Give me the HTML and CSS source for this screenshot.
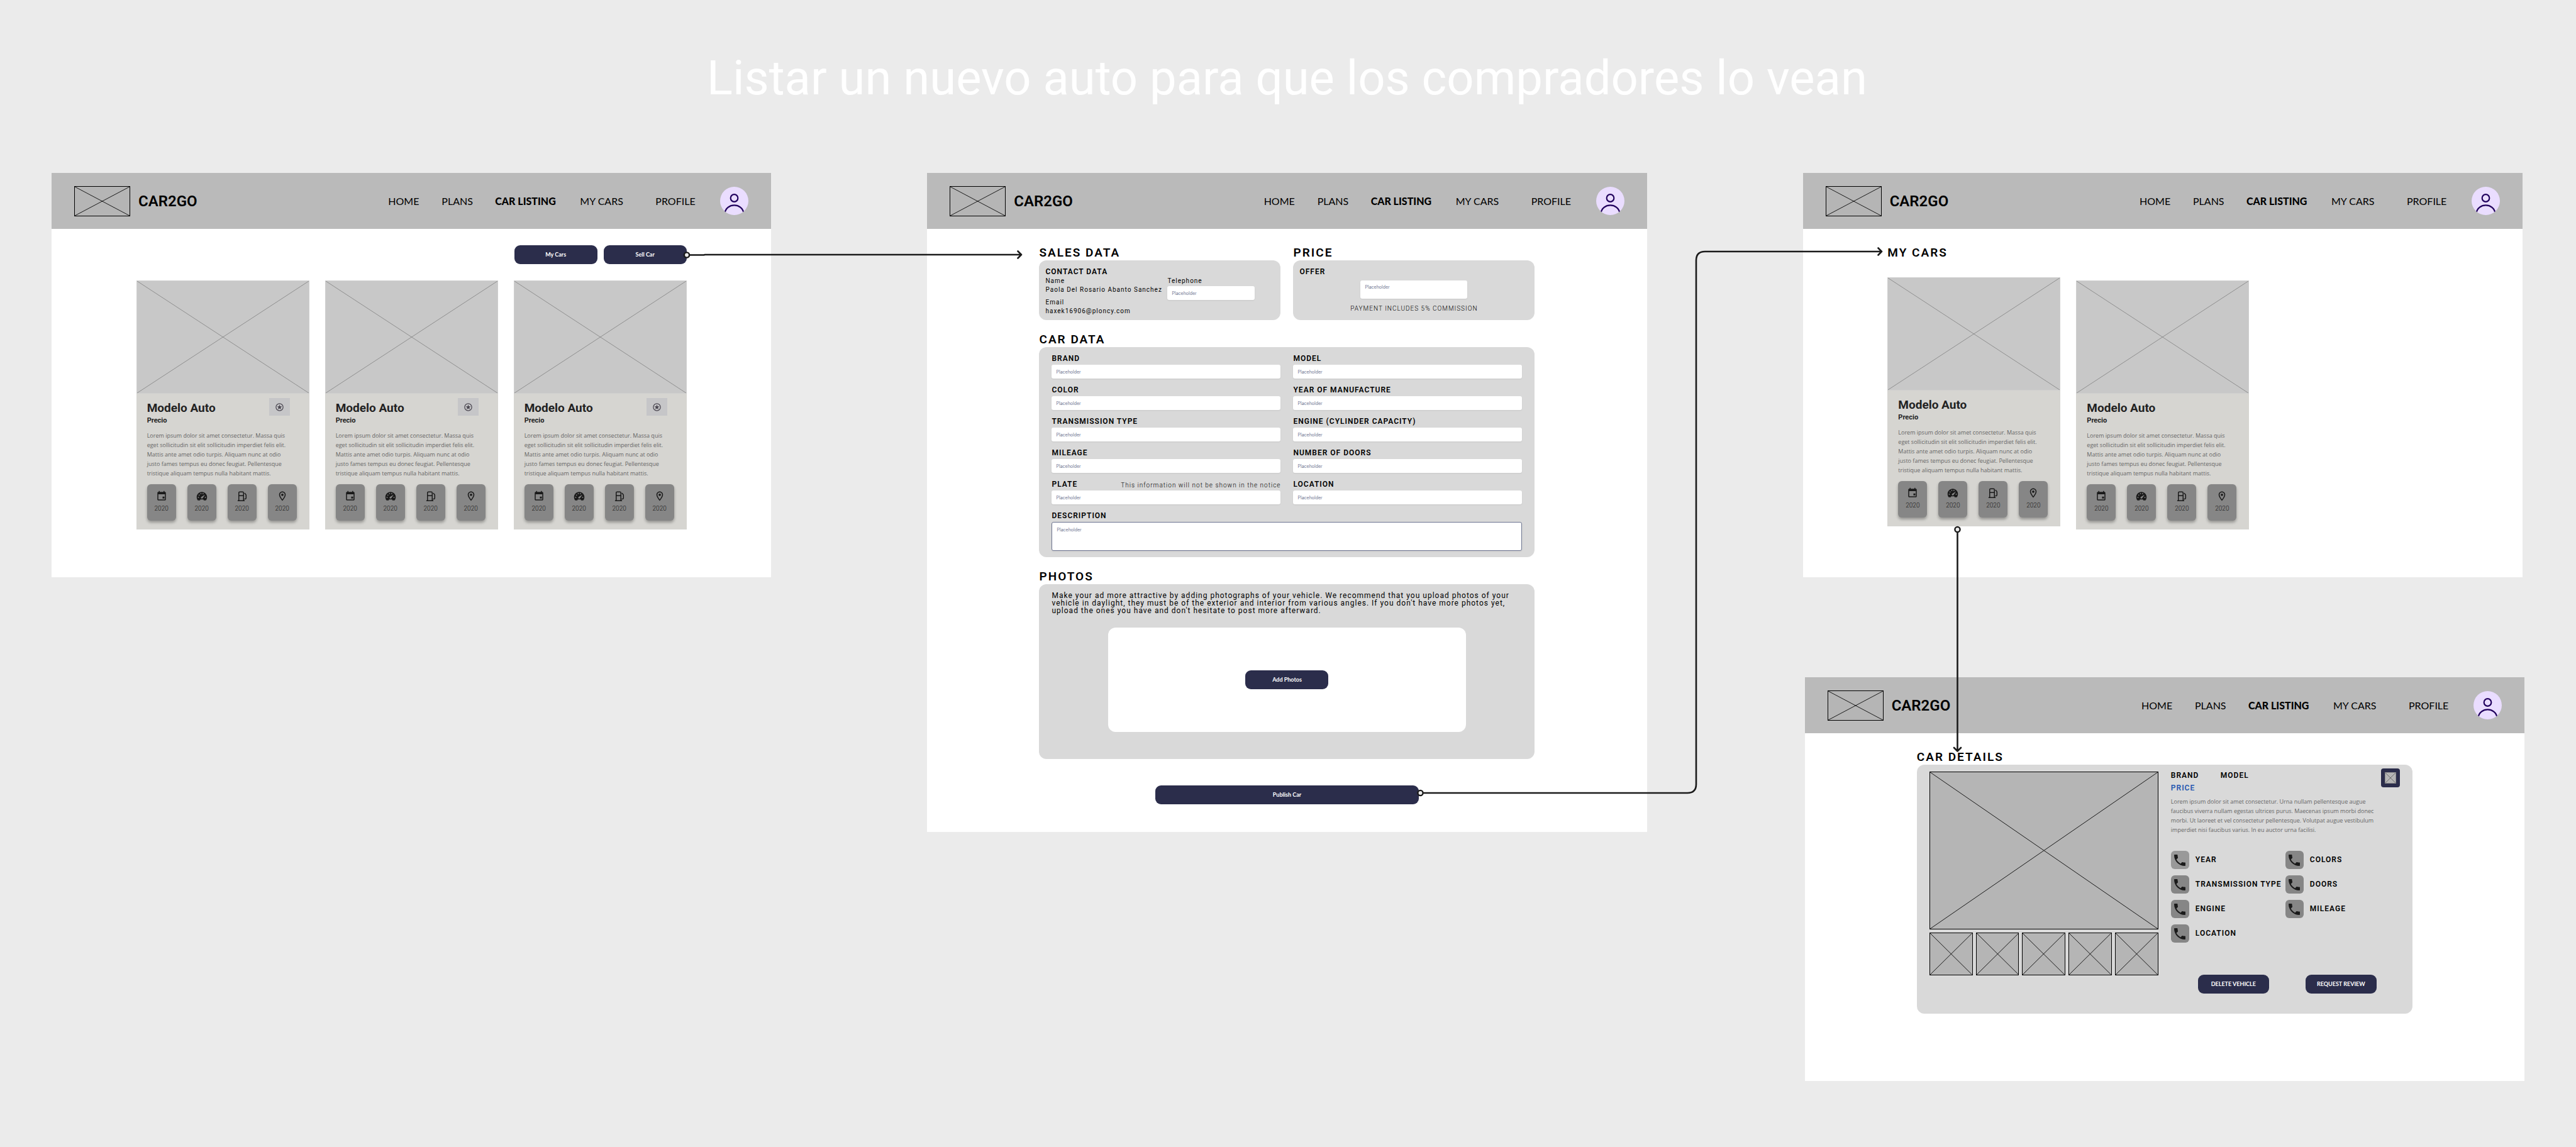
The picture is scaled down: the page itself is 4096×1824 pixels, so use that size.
FILE: index.html
```html
<!DOCTYPE html>
<html lang="es">
<head>
<meta charset="utf-8">
<title>CAR2GO – Listar un nuevo auto</title>
<link rel="stylesheet" href="styles.css">
</head>
<body>
<svg class="sprite" aria-hidden="true">
  <symbol id="cross" viewBox="0 0 100 100" preserveAspectRatio="none">
    <path d="M0 0L100 100M100 0L0 100" fill="none" stroke="currentColor" vector-effect="non-scaling-stroke"/>
  </symbol>
  <symbol id="avatar" viewBox="0 0 75 75">
    <clipPath id="avatar-clip"><circle cx="37.500" cy="37.500" r="37.500"/></clipPath>
    <g clip-path="url(#avatar-clip)">
      <rect width="75" height="75" fill="#eaddff"/>
      <circle cx="37.500" cy="30" r="9.700" fill="none" stroke="#21005d" stroke-width="3.600"/>
      <path d="M12.500 70C16 42 59 42 62.500 70" fill="none" stroke="#21005d" stroke-width="3.800"/>
    </g>
  </symbol>
  <symbol id="star" viewBox="0 0 24 24">
    <circle cx="12" cy="12" r="9" fill="none" stroke="currentColor" stroke-width="2"/>
    <path d="M12 5.500l1.700 4.300 4.600.3-3.500 3 1.100 4.500L12 15.100l-3.900 2.500 1.100-4.500-3.500-3 4.600-.3z" fill="currentColor"/>
  </symbol>
  <symbol id="calendar" viewBox="0 0 24 24">
    <path fill="currentColor" d="M18 13h-4v4h4v-4zM16 1v2H8V1H6v2H5c-1.110 0-1.990.9-1.990 2L3 19c0 1.100.89 2 2 2h14c1.100 0 2-.9 2-2V5c0-1.100-.9-2-2-2h-1V1h-2zm3 18H5V8h14v11z"/>
  </symbol>
  <symbol id="gauge" viewBox="0 0 24 24">
    <path fill="currentColor" d="M12 3C5.600 3 1 8 1 14c0 2.600.8 5 2.200 6.600.3.300.6.400 1 .4h3c.5 0 .9-.3 1.100-.8l.5-1.200h6.400l.5 1.200c.2.500.6.800 1.100.8h3c.4 0 .7-.1 1-.4C22.200 19 23 16.600 23 14c0-6-4.600-11-11-11z"/>
    <g fill="#868686"><circle cx="4.600" cy="14.500" r="1.200"/><circle cx="6.300" cy="9.800" r="1.200"/><circle cx="10" cy="6.600" r="1.200"/><circle cx="14.500" cy="6.600" r="1.200"/><circle cx="19.400" cy="14.500" r="1.200"/><path d="M18.800 8.600l-5.200 7.700c-.7 1-2.100 1.100-3 .3-.9-.9-.7-2.300.3-3z"/></g>
  </symbol>
  <symbol id="fuel" viewBox="0 0 24 24">
    <g fill="none" stroke="currentColor" stroke-width="2"><path d="M5 21.500V5c0-1.300.7-2 2-2h6c1.300 0 2 .7 2 2v16.500M5 11h10M2.500 21.500h15"/><path d="M17 5.500l2.500 2.500c.6.700.9 1.300.9 2.200V16c0 2.500-3 2.500-3.600 1.500"/></g>
  </symbol>
  <symbol id="pin" viewBox="0 0 24 24">
    <path fill="currentColor" d="M12 2C8.130 2 5 5.130 5 9c0 5.250 7 13 7 13s7-7.750 7-13c0-3.870-3.130-7-7-7zM7 9c0-2.760 2.240-5 5-5s5 2.240 5 5c0 2.880-2.880 7.190-5 9.880C9.920 16.210 7 11.850 7 9z"/>
    <circle cx="12" cy="9" r="2.500" fill="currentColor"/>
  </symbol>
  <symbol id="phone" viewBox="0 0 24 24">
    <path fill="currentColor" d="M6.620 10.790c1.440 2.830 3.760 5.140 6.590 6.590l2.200-2.200c.27-.27.67-.36 1.020-.24 1.120.37 2.330.57 3.570.57.55 0 1 .45 1 1V20c0 .55-.45 1-1 1-9.390 0-17-7.610-17-17 0-.55.45-1 1-1h3.500c.55 0 1 .45 1 1 0 1.250.2 2.450.57 3.570.11.35.03.74-.25 1.020l-2.200 2.200z"/>
  </symbol>
</svg>

<main class="board">
  <h1 class="board-title">Listar un nuevo auto para que los compradores lo vean</h1>

  <div class="flow">
    <div class="flow-column">
      <section class="screen">
        <header class="topbar">
          <svg class="logo"><use href="#cross"/></svg>
          <span class="brand">CAR2GO</span>
          <nav class="nav">
            <a href="#">HOME</a><a href="#">PLANS</a><a href="#" class="current">CAR LISTING</a><a href="#">MY CARS</a><a href="#">PROFILE</a>
            <svg class="avatar"><use href="#avatar"/></svg>
          </nav>
        </header>
        <div class="content content-cards">
          <div class="actions">
            <button class="btn">My Cars</button>
            <button class="btn">Sell Car</button>
          </div>
          <div class="cards">
            <article class="card">
              <svg class="card-photo"><use href="#cross"/></svg>
              <div class="card-body">
                <div class="card-head"><h3>Modelo Auto</h3><button class="fav" aria-label="Favorito"><svg><use href="#star"/></svg></button></div>
                <p class="card-price">Precio</p>
                <p class="lorem">Lorem ipsum dolor sit amet consectetur. Massa quis<br>eget sollicitudin sit elit sollicitudin imperdiet felis elit.<br>Mattis ante amet odio turpis. Aliquam nunc at odio<br>justo fames tempus eu donec feugiat. Pellentesque<br>tristique aliquam tempus nulla habitant mattis.</p>
                <ul class="chips"><li><svg><use href="#calendar"/></svg>2020</li><li><svg><use href="#gauge"/></svg>2020</li><li><svg><use href="#fuel"/></svg>2020</li><li><svg><use href="#pin"/></svg>2020</li></ul>
              </div>
            </article>
            <article class="card">
              <svg class="card-photo"><use href="#cross"/></svg>
              <div class="card-body">
                <div class="card-head"><h3>Modelo Auto</h3><button class="fav" aria-label="Favorito"><svg><use href="#star"/></svg></button></div>
                <p class="card-price">Precio</p>
                <p class="lorem">Lorem ipsum dolor sit amet consectetur. Massa quis<br>eget sollicitudin sit elit sollicitudin imperdiet felis elit.<br>Mattis ante amet odio turpis. Aliquam nunc at odio<br>justo fames tempus eu donec feugiat. Pellentesque<br>tristique aliquam tempus nulla habitant mattis.</p>
                <ul class="chips"><li><svg><use href="#calendar"/></svg>2020</li><li><svg><use href="#gauge"/></svg>2020</li><li><svg><use href="#fuel"/></svg>2020</li><li><svg><use href="#pin"/></svg>2020</li></ul>
              </div>
            </article>
            <article class="card">
              <svg class="card-photo"><use href="#cross"/></svg>
              <div class="card-body">
                <div class="card-head"><h3>Modelo Auto</h3><button class="fav" aria-label="Favorito"><svg><use href="#star"/></svg></button></div>
                <p class="card-price">Precio</p>
                <p class="lorem">Lorem ipsum dolor sit amet consectetur. Massa quis<br>eget sollicitudin sit elit sollicitudin imperdiet felis elit.<br>Mattis ante amet odio turpis. Aliquam nunc at odio<br>justo fames tempus eu donec feugiat. Pellentesque<br>tristique aliquam tempus nulla habitant mattis.</p>
                <ul class="chips"><li><svg><use href="#calendar"/></svg>2020</li><li><svg><use href="#gauge"/></svg>2020</li><li><svg><use href="#fuel"/></svg>2020</li><li><svg><use href="#pin"/></svg>2020</li></ul>
              </div>
            </article>
          </div>
        </div>
      </section>
    </div>

    <div class="flow-column">
      <section class="screen">
        <header class="topbar">
          <svg class="logo"><use href="#cross"/></svg>
          <span class="brand">CAR2GO</span>
          <nav class="nav">
            <a href="#">HOME</a><a href="#">PLANS</a><a href="#" class="current">CAR LISTING</a><a href="#">MY CARS</a><a href="#">PROFILE</a>
            <svg class="avatar"><use href="#avatar"/></svg>
          </nav>
        </header>
        <form class="content content-form">
          <div class="pair">
            <section>
              <h2>SALES DATA</h2>
              <div class="panel contact">
                <h3 class="label">CONTACT DATA</h3>
                <div class="contact-grid">
                  <dl>
                    <dt>Name</dt><dd>Paola Del Rosario Abanto Sanchez</dd>
                    <dt>Email</dt><dd>haxek16906@ploncy.com</dd>
                  </dl>
                  <div class="phone-field">
                    <label for="telephone">Telephone</label>
                    <input class="field" id="telephone" type="tel" placeholder="Placeholder">
                  </div>
                </div>
              </div>
            </section>
            <section>
              <h2>PRICE</h2>
              <div class="panel offer">
                <label class="label" for="offer">OFFER</label>
                <textarea class="field" id="offer" placeholder="Placeholder"></textarea>
                <p class="commission">PAYMENT INCLUDES 5% COMMISSION</p>
              </div>
            </section>
          </div>
          <section>
            <h2>CAR DATA</h2>
            <div class="panel car-data">
              <div class="form-row"><label class="label" for="brand">BRAND</label><input class="field" id="brand" placeholder="Placeholder"></div>
              <div class="form-row"><label class="label" for="model">MODEL</label><input class="field" id="model" placeholder="Placeholder"></div>
              <div class="form-row"><label class="label" for="color">COLOR</label><input class="field" id="color" placeholder="Placeholder"></div>
              <div class="form-row"><label class="label" for="year">YEAR OF MANUFACTURE</label><input class="field" id="year" placeholder="Placeholder"></div>
              <div class="form-row"><label class="label" for="transmission">TRANSMISSION TYPE</label><input class="field" id="transmission" placeholder="Placeholder"></div>
              <div class="form-row"><label class="label" for="engine">ENGINE (CYLINDER CAPACITY)</label><input class="field" id="engine" placeholder="Placeholder"></div>
              <div class="form-row"><label class="label" for="mileage">MILEAGE</label><input class="field" id="mileage" placeholder="Placeholder"></div>
              <div class="form-row"><label class="label" for="doors">NUMBER OF DOORS</label><input class="field" id="doors" placeholder="Placeholder"></div>
              <div class="form-row"><label class="label" for="plate">PLATE</label><span class="hint">This information will not be shown in the notice</span><input class="field" id="plate" placeholder="Placeholder"></div>
              <div class="form-row"><label class="label" for="location">LOCATION</label><input class="field" id="location" placeholder="Placeholder"></div>
              <div class="form-row wide"><label class="label" for="description">DESCRIPTION</label><textarea class="field outlined" id="description" placeholder="Placeholder"></textarea></div>
            </div>
          </section>
          <section>
            <h2>PHOTOS</h2>
            <div class="panel photos">
              <p>Make your ad more attractive by adding photographs of your vehicle. We recommend that you upload photos of your<br>vehicle in daylight, they must be of the exterior and interior from various angles. If you don't have more photos yet,<br>upload the ones you have and don't hesitate to post more afterward.</p>
              <div class="dropzone"><button type="button" class="btn">Add Photos</button></div>
            </div>
          </section>
          <button type="button" class="btn publish">Publish Car</button>
        </form>
      </section>
    </div>

    <div class="flow-column">
      <section class="screen">
        <header class="topbar">
          <svg class="logo"><use href="#cross"/></svg>
          <span class="brand">CAR2GO</span>
          <nav class="nav">
            <a href="#">HOME</a><a href="#">PLANS</a><a href="#" class="current">CAR LISTING</a><a href="#">MY CARS</a><a href="#">PROFILE</a>
            <svg class="avatar"><use href="#avatar"/></svg>
          </nav>
        </header>
        <div class="content content-cards">
          <h2>MY CARS</h2>
          <div class="cards staggered">
            <article class="card">
              <svg class="card-photo"><use href="#cross"/></svg>
              <div class="card-body">
                <div class="card-head"><h3>Modelo Auto</h3></div>
                <p class="card-price">Precio</p>
                <p class="lorem">Lorem ipsum dolor sit amet consectetur. Massa quis<br>eget sollicitudin sit elit sollicitudin imperdiet felis elit.<br>Mattis ante amet odio turpis. Aliquam nunc at odio<br>justo fames tempus eu donec feugiat. Pellentesque<br>tristique aliquam tempus nulla habitant mattis.</p>
                <ul class="chips"><li><svg><use href="#calendar"/></svg>2020</li><li><svg><use href="#gauge"/></svg>2020</li><li><svg><use href="#fuel"/></svg>2020</li><li><svg><use href="#pin"/></svg>2020</li></ul>
              </div>
            </article>
            <article class="card">
              <svg class="card-photo"><use href="#cross"/></svg>
              <div class="card-body">
                <div class="card-head"><h3>Modelo Auto</h3></div>
                <p class="card-price">Precio</p>
                <p class="lorem">Lorem ipsum dolor sit amet consectetur. Massa quis<br>eget sollicitudin sit elit sollicitudin imperdiet felis elit.<br>Mattis ante amet odio turpis. Aliquam nunc at odio<br>justo fames tempus eu donec feugiat. Pellentesque<br>tristique aliquam tempus nulla habitant mattis.</p>
                <ul class="chips"><li><svg><use href="#calendar"/></svg>2020</li><li><svg><use href="#gauge"/></svg>2020</li><li><svg><use href="#fuel"/></svg>2020</li><li><svg><use href="#pin"/></svg>2020</li></ul>
              </div>
            </article>
          </div>
        </div>
      </section>

      <section class="screen screen-details">
        <header class="topbar">
          <svg class="logo"><use href="#cross"/></svg>
          <span class="brand">CAR2GO</span>
          <nav class="nav">
            <a href="#">HOME</a><a href="#">PLANS</a><a href="#" class="current">CAR LISTING</a><a href="#">MY CARS</a><a href="#">PROFILE</a>
            <svg class="avatar"><use href="#avatar"/></svg>
          </nav>
        </header>
        <div class="content content-details">
          <h2>CAR DETAILS</h2>
          <div class="panel details">
            <div class="gallery">
              <svg class="photo photo-main"><use href="#cross"/></svg>
              <svg class="photo"><use href="#cross"/></svg>
              <svg class="photo"><use href="#cross"/></svg>
              <svg class="photo"><use href="#cross"/></svg>
              <svg class="photo"><use href="#cross"/></svg>
              <svg class="photo"><use href="#cross"/></svg>
            </div>
            <div class="info">
              <div class="info-head">
                <div class="info-title"><span class="label">BRAND</span><span class="label">MODEL</span><span class="label price">PRICE</span></div>
                <button class="wish" aria-label="Guardar"><svg><use href="#cross"/></svg></button>
              </div>
              <p class="lorem">Lorem ipsum dolor sit amet consectetur. Urna nullam pellentesque augue<br>faucibus viverra nullam egestas ultrices purus. Maecenas ipsum morbi donec<br>morbi. Ut laoreet et vel consectetur pellentesque. Volutpat augue vestibulum<br>imperdiet nisi faucibus varius. In eu auctor urna facilisi.</p>
              <ul class="specs">
                <li class="label"><span class="spec-icon light"><svg><use href="#phone"/></svg></span>YEAR</li>
                <li class="label"><span class="spec-icon"><svg><use href="#phone"/></svg></span>COLORS</li>
                <li class="label"><span class="spec-icon"><svg><use href="#phone"/></svg></span>TRANSMISSION TYPE</li>
                <li class="label"><span class="spec-icon"><svg><use href="#phone"/></svg></span>DOORS</li>
                <li class="label"><span class="spec-icon"><svg><use href="#phone"/></svg></span>ENGINE</li>
                <li class="label"><span class="spec-icon"><svg><use href="#phone"/></svg></span>MILEAGE</li>
                <li class="label"><span class="spec-icon"><svg><use href="#phone"/></svg></span>LOCATION</li>
              </ul>
              <div class="info-actions">
                <button class="btn">DELETE VEHICLE</button>
                <button class="btn">REQUEST REVIEW</button>
              </div>
            </div>
          </div>
        </div>
      </section>
    </div>
  </div>

  <svg class="connectors" viewBox="0 0 4096 1824" preserveAspectRatio="none" aria-hidden="true">
    <g fill="none" stroke="#1a1a1a" stroke-width="2.600" stroke-linecap="round" stroke-linejoin="round">
      <path d="M1097 405.500H1119L1121 405H1624M1618.500 399.500L1624 405L1618.500 410.500"/>
      <path d="M2264 1261H2683Q2697 1261 2697 1247V414Q2697 400 2711 400H2992M2986.500 394.500L2992 400L2986.500 405.500"/>
      <path d="M3112.500 848V1194.500M3107 1189L3112.500 1194.500L3118 1189"/>
    </g>
    <g fill="#ebebeb" stroke="#1a1a1a" stroke-width="2.400">
      <circle cx="1092" cy="405.500" r="4.100"/>
      <circle cx="2258.500" cy="1261" r="4.100"/>
      <circle cx="3112.500" cy="842" r="4.100"/>
    </g>
  </svg>
</main>
</body>
</html>
```
FILE: styles.css
```css
* { box-sizing: border-box; margin: 0; padding: 0; }

body {
  background: #ebebeb;
  color: #000;
  font-family: Roboto, "Liberation Sans", sans-serif;
}

svg { display: block; }
ul { list-style: none; }
a { color: inherit; text-decoration: none; }
button, input, textarea { font: inherit; border: 0; }

.sprite { position: absolute; width: 0; height: 0; }

.board {
  position: relative;
  min-height: 100vh;
  padding: 79px 85px 0 82px;
}

.board-title {
  margin-bottom: 106px;
  color: #fff;
  font-size: 76px;
  font-weight: 400;
  line-height: 90px;
  text-align: center;
}

.flow {
  display: grid;
  grid-template-columns: repeat(3, minmax(0, 1fr));
  column-gap: 248px;
  align-items: start;
}

.flow-column { display: flex; flex-direction: column; gap: 159px; }

.connectors {
  position: absolute;
  top: 0;
  left: 0;
  width: 100%;
  height: 100%;
  pointer-events: none;
}

/* screens */
.screen { background: #fff; }
.screen-details { margin: 0 -3px 0 3px; }

.topbar {
  display: flex;
  align-items: center;
  height: 89px;
  padding: 0 36px;
  background: #bababa;
}

.logo {
  width: 89px;
  height: 48px;
  border: 1px solid #000;
  background: #b5b5b5;
  color: #1a1a1a;
}

.brand {
  margin-left: 13px;
  font-size: 24px;
  font-weight: 600;
  line-height: 28px;
}

.nav {
  display: grid;
  grid-template-columns: 85px 85px 135px 120px 103px 45px;
  align-items: center;
  margin-left: auto;
  font-family: Lato, "Liberation Sans", sans-serif;
  font-size: 16px;
  line-height: 20px;
}

.current { font-weight: 900; }
.avatar { width: 45px; height: 45px; }

.content { margin: 0 auto; padding-top: 26px; }
.content-cards { width: 875px; padding-bottom: 76px; }
.content-form { width: 788px; padding-bottom: 44px; }
.content-details { width: 788px; padding-bottom: 107px; }

h2 {
  font-size: 19px;
  font-weight: 600;
  line-height: 24px;
  letter-spacing: 2px;
}

.label {
  display: block;
  font-size: 12px;
  font-weight: 600;
  line-height: 15px;
  letter-spacing: 1px;
}

.btn {
  width: 132px;
  height: 30px;
  border-radius: 9px;
  background: #2b2d4b;
  color: #fff;
  font-family: Lato, "Liberation Sans", sans-serif;
  font-size: 9px;
  font-weight: 700;
  line-height: 12px;
}

/* vehicle cards */
.actions { display: flex; justify-content: flex-end; gap: 10px; margin-bottom: 26px; }
.cards { display: flex; align-items: flex-start; gap: 25px; }
h2 + .cards { margin-top: 27px; }
.staggered .card:nth-child(even) { margin-top: 5px; }

.card { width: 275px; background: #d6d5d1; }

.card-photo {
  width: 100%;
  height: 180px;
  border: 1px solid #cfcfcf;
  background: #c8c8c8;
  color: #8f8f8f;
}

.card-body { padding: 7px 17px 14px; }
.card-head { display: flex; justify-content: space-between; align-items: flex-end; min-height: 28px; }
.card-head h3 { color: #222; font-size: 19px; font-weight: 700; line-height: 24px; }

.fav {
  display: grid;
  place-items: center;
  width: 33px;
  height: 28px;
  margin-right: 14px;
  background: #c6c6c8;
  color: #49454f;
}
.fav svg { width: 15px; height: 15px; }

.card-price { margin-bottom: 8px; color: #222; font-size: 11px; font-weight: 700; line-height: 16px; }

.lorem {
  color: #666;
  font-family: "Open Sans", "Noto Sans", sans-serif;
  font-size: 9px;
  line-height: 15px;
  white-space: nowrap;
}

.chips { display: flex; gap: 18px; margin-top: 10px; }
.chips li {
  display: flex;
  flex-direction: column;
  align-items: center;
  gap: 5px;
  width: 46px;
  height: 58px;
  padding-top: 10px;
  border-radius: 6px;
  background: #868686;
  box-shadow: 0 3px 4px rgba(0, 0, 0, .3);
  color: #1a1a1a;
  font-size: 10px;
  font-weight: 300;
  line-height: 12px;
}
.chips svg { width: 18px; height: 18px; }

/* listing form */
.content-form { display: flex; flex-direction: column; gap: 19px; }
.pair { display: grid; grid-template-columns: 1fr 1fr; gap: 20px; }
.panel { border-radius: 12px; background: #d9d9d9; }

.field {
  display: block;
  width: 100%;
  height: 22px;
  padding: 0 7px;
  border-radius: 3px;
  background: #fff;
  box-shadow: 0 1px 2px rgba(0, 0, 0, .08);
  font-family: Inter, Roboto, sans-serif;
  font-size: 7px;
  line-height: 10px;
  resize: none;
}
.field::placeholder { color: #6e7591; opacity: 1; }
textarea.field { padding-top: 6px; }

.contact, .offer { height: 95px; padding: 11px 10px 0; }
.contact-grid {
  display: grid;
  grid-template-columns: 194px 139px;
  font-size: 10px;
  line-height: 14px;
  letter-spacing: 1px;
  white-space: nowrap;
}
.contact-grid dd + dt { margin-top: 6px; }
.phone-field .field { margin-top: 1px; }

.offer .field { width: 170px; height: 29px; margin: 6px auto 9px; }
.commission { font-size: 10px; font-weight: 300; line-height: 14px; letter-spacing: 1px; text-align: center; }

.car-data {
  display: grid;
  grid-template-columns: 1fr 1fr;
  gap: 11px 20px;
  padding: 11px 20px 10px;
}
.form-row { display: grid; grid-template-columns: auto 1fr; row-gap: 2px; }
.form-row .field { grid-column: 1 / -1; }
.wide { grid-column: 1 / -1; }
.wide .field { height: 46px; padding-top: 7px; }
.outlined { border: 1px solid #6e7591; }
.hint {
  align-self: end;
  font-size: 10px;
  font-weight: 300;
  line-height: 12px;
  letter-spacing: 1px;
  text-align: right;
}

.photos { padding: 12px 20px 43px; font-size: 12px; line-height: 12px; letter-spacing: 1px; }
.photos p { white-space: nowrap; }
.dropzone {
  display: grid;
  place-items: center;
  width: 569px;
  height: 166px;
  margin: 21px auto 0;
  border-radius: 12px;
  background: #fff;
}
.publish { width: 419px; margin: 23px auto 0; }

/* vehicle details */
.details {
  display: grid;
  grid-template-columns: 1fr 1fr;
  column-gap: 20px;
  height: 396px;
  padding: 6px 20px 0;
}
.gallery {
  display: grid;
  grid-template-columns: repeat(5, 1fr);
  grid-template-rows: 251px 68px;
  gap: 5px;
  margin-top: 5px;
}
.photo { width: 100%; height: 100%; border: 1px solid #000; background: #b5b5b5; color: #1a1a1a; }
.photo-main { grid-column: 1 / -1; }

.info-head { display: flex; justify-content: space-between; margin-bottom: 6px; }
.info-title { display: grid; grid-template-columns: 79px auto; row-gap: 5px; padding-top: 4px; }
.price { color: #2558b0; }
.wish { width: 30px; height: 30px; padding: 6px; border-radius: 4px; background: #2b2d4b; }
.wish svg { width: 18px; height: 18px; border: 1px solid #8f8f8f; background: #b5b5b5; color: #6f6f6f; }

.specs { display: grid; grid-template-columns: 182px 182px; row-gap: 10px; margin-top: 26px; }
.specs li { display: flex; align-items: center; gap: 10px; white-space: nowrap; }
.spec-icon {
  display: grid;
  place-items: center;
  width: 29px;
  height: 29px;
  border-radius: 6px;
  background: #868686;
  color: #1a1a1a;
}
.light { background: #999; }
.spec-icon svg { width: 24px; height: 24px; }

.info-actions { display: flex; gap: 58px; margin: 51px 0 0 43px; }
.info-actions .btn { width: 113px; }
```
